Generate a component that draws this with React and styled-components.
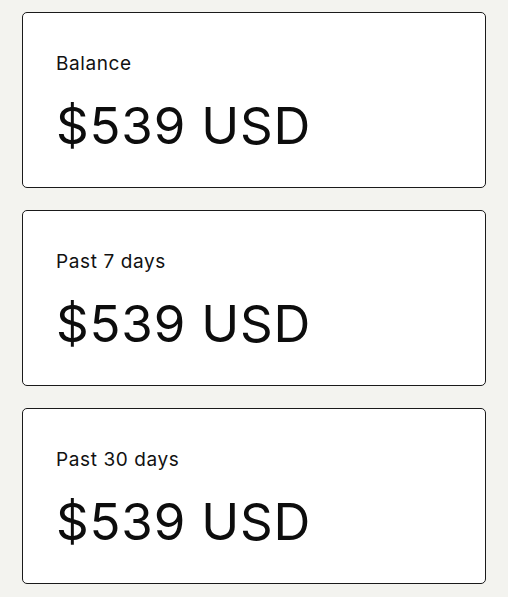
import React from "react";
import styled, { createGlobalStyle } from "styled-components";

const GlobalStyle = createGlobalStyle`
  html, body {
    margin: 0;
    padding: 0;
    background: #f3f3ef;
  }
  body {
    font-family: Inter, "Noto Sans", "Liberation Sans", sans-serif;
    color: #111;
  }
`;

const Page = styled.div`
  display: flex;
  flex-direction: column;
  gap: 22px;
  padding: 12px 22px;
  width: 508px;
  box-sizing: border-box;
`;

const Card = styled.section`
  background: #fff;
  border: 1.5px solid #1a1a1a;
  border-radius: 5px;
  padding: 40px 33px 32px;
  display: flex;
  flex-direction: column;
  gap: 19px;
  height: 176px;
  box-sizing: border-box;
`;

const Label = styled.div`
  font-size: 19px;
  line-height: 1.2;
  font-weight: 400;
  letter-spacing: 0.6px;
  color: #111;
`;

const Amount = styled.div`
  font-size: 51px;
  line-height: 1.2;
  font-weight: 400;
  color: #0d0d0d;
  letter-spacing: 0.8px;
`;

const stats = [
  { label: "Balance", value: "$539 USD" },
  { label: "Past 7 days", value: "$539 USD" },
  { label: "Past 30 days", value: "$539 USD" },
];

export default function App() {
  return (
    <>
      <GlobalStyle />
      <Page>
        {stats.map((s) => (
          <Card key={s.label}>
            <Label>{s.label}</Label>
            <Amount>{s.value}</Amount>
          </Card>
        ))}
      </Page>
    </>
  );
}
